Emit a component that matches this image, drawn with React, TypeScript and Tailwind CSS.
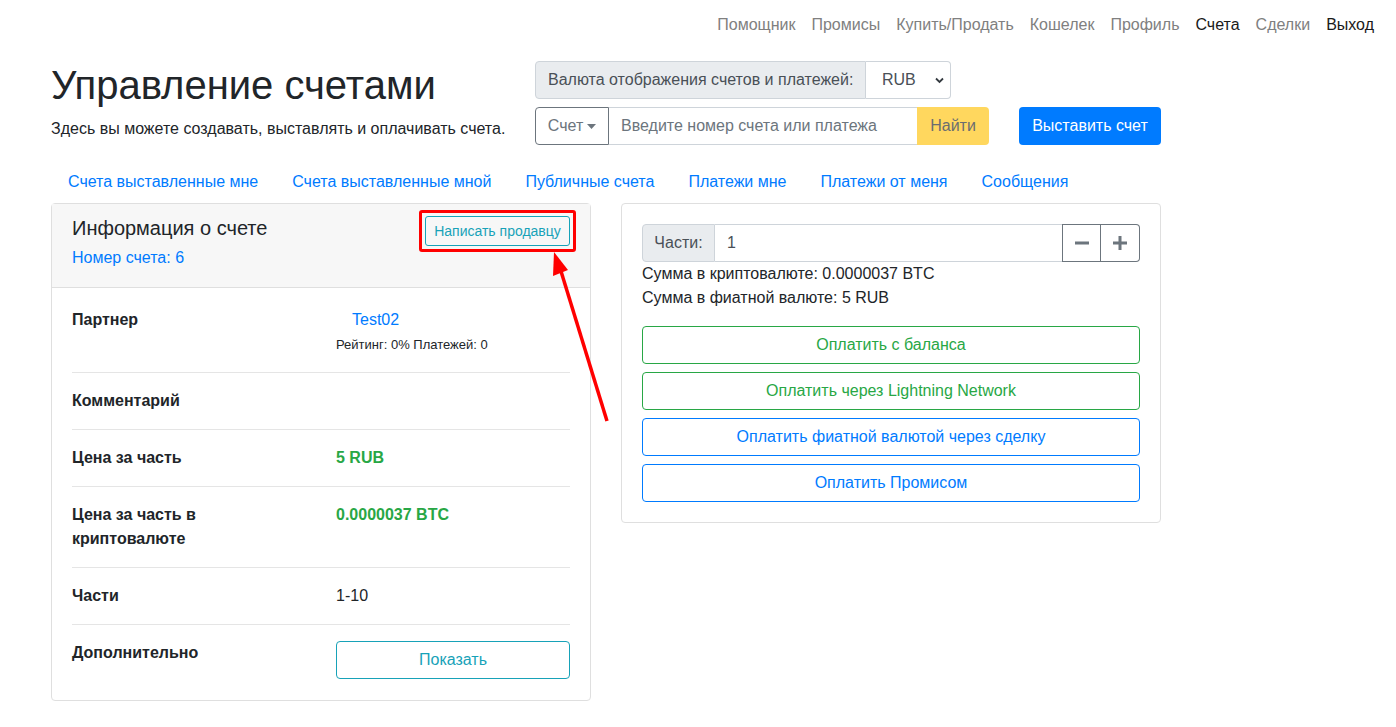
import React from 'react';

const font = { fontFamily: '"Liberation Sans", Arial, sans-serif' };

const topLinks = [
  { label: 'Помощник', active: false },
  { label: 'Промисы', active: false },
  { label: 'Купить/Продать', active: false },
  { label: 'Кошелек', active: false },
  { label: 'Профиль', active: false },
  { label: 'Счета', active: true },
  { label: 'Сделки', active: false },
  { label: 'Выход', active: true },
];

const tabs = [
  'Счета выставленные мне',
  'Счета выставленные мной',
  'Публичные счета',
  'Платежи мне',
  'Платежи от меня',
  'Сообщения',
];

const Row = ({ label, children, first }: { label: React.ReactNode; children?: React.ReactNode; first?: boolean }) => (
  <div className={`grid grid-cols-[264px_1fr] ${first ? 'pt-[20px] pb-[17px]' : 'border-t border-[#e5e5e5] py-4'}`}>
    <div className="font-bold leading-6 text-[#212529]">{label}</div>
    <div>{children}</div>
  </div>
);

const App = () => {
  return (
    <div className="relative min-h-[727px] bg-white text-[16px] text-[#212529]" style={font}>
      {/* top navbar */}
      <nav className="flex h-12 items-center justify-end pt-[2px] pr-[14px]">
        {topLinks.map((l) => (
          <a key={l.label} className={`px-2 leading-6 ${l.active ? 'text-[#1a1a1a]' : 'text-[#808080]'}`}>
            {l.label}
          </a>
        ))}
      </nav>

      <div className="mx-[36px] w-[1140px] px-[15px]">
        {/* header */}
        <div className="mt-[13px] flex">
          <div className="w-[484px] shrink-0">
            <h1 className="text-[40px] leading-[48px] font-normal">Управление счетами</h1>
            <p className="mt-2 leading-6">Здесь вы можете создавать, выставлять и оплачивать счета.</p>
          </div>
          <div className="flex flex-col gap-2">
            <div className="flex h-[38px] w-[416px]">
              <div className="flex w-[331px] shrink-0 items-center whitespace-nowrap rounded-l-[4px] border border-[#ced4da] bg-[#e9ecef] px-3 text-[#495057]">
                Валюта отображения счетов и платежей:
              </div>
              <div className="relative flex flex-1 items-center rounded-r-[4px] border border-l-0 border-[#ced4da] pl-4 text-[#495057]">
                RUB
                <svg className="absolute right-[6px] top-[15px]" width="9" height="7" viewBox="0 0 9 7">
                  <path d="M1 1.5 L4.5 5 L8 1.5" fill="none" stroke="#343a40" strokeWidth="1.8" />
                </svg>
              </div>
            </div>
            <div className="flex h-[38px] items-stretch">
              <div className="flex w-[74px] items-center justify-center gap-1 rounded-l-[4px] border border-[#6c757d] text-[#6c757d]">
                Счет
                <svg width="9" height="5" viewBox="0 0 9 5">
                  <path d="M0 0 L9 0 L4.5 5 Z" fill="#6c757d" />
                </svg>
              </div>
              <div className="flex w-[308px] items-center border-y border-[#ced4da] px-3 text-[#6c757d]">
                Введите номер счета или платежа
              </div>
              <div className="flex w-[72px] items-center justify-center rounded-r-[4px] bg-[#ffd75e] text-[#6b6d70]">
                Найти
              </div>
              <div className="ml-[30px] flex w-[142px] items-center justify-center rounded-[4px] bg-[#007bff] text-white">
                Выставить счет
              </div>
            </div>
          </div>
        </div>

        {/* tabs */}
        <div className="mt-[17px] flex">
          {tabs.map((t) => (
            <a key={t} className="whitespace-nowrap px-[17px] py-2 leading-6 text-[#007bff]">
              {t}
            </a>
          ))}
        </div>

        <div className="mt-[1px] flex items-start gap-[30px]">
          {/* left card */}
          <div className="w-[540px] rounded-[4px] border border-[#dfdfdf]">
            <div className="flex h-[84px] justify-between border-b border-[#dfdfdf] bg-[#f7f7f7] px-5 pt-3">
              <div>
                <div className="text-[20px] leading-6">Информация о счете</div>
                <div className="mt-[6px] leading-6 text-[#007bff]">Номер счета: 6</div>
              </div>
              <div className="relative h-[30px]">
                <div className="flex h-[30px] w-[145px] items-center justify-center rounded-[3px] border border-[#17a2b8] text-[14px] text-[#17a2b8]">
                  Написать продавцу
                </div>
                <span className="absolute -inset-[6px] rounded-[3px] border-[3px] border-[#ff0000]" />
              </div>
            </div>
            <div className="px-5 pb-[21px]">
              <Row label="Партнер" first>
                <div className="pl-4 leading-6 text-[#007bff]">Test02</div>
                <div className="mt-[3px] text-[13px] leading-5">Рейтинг: 0% Платежей: 0</div>
              </Row>
              <Row label="Комментарий" />
              <Row label="Цена за часть">
                <div className="font-bold leading-6 text-[#28a745]">5 RUB</div>
              </Row>
              <Row label={<>Цена за часть в<br />криптовалюте</>}>
                <div className="font-bold leading-6 text-[#28a745]">0.0000037 BTC</div>
              </Row>
              <Row label="Части">
                <div className="leading-6">1-10</div>
              </Row>
              <div className="grid grid-cols-[264px_1fr] border-t border-[#e5e5e5] pt-4">
                <div className="font-bold leading-6">Дополнительно</div>
                <div className="flex h-[38px] items-center justify-center rounded-[4px] border border-[#17a2b8] text-[#17a2b8]">
                  Показать
                </div>
              </div>
            </div>
          </div>

          {/* right card */}
          <div className="w-[540px] rounded-[4px] border border-[#dfdfdf] p-5">
            <div className="flex h-[38px]">
              <div className="flex w-[73px] items-center justify-center rounded-l-[4px] border border-[#ced4da] bg-[#e9ecef] text-[#495057]">
                Части:
              </div>
              <div className="flex flex-1 items-center border-y border-[#ced4da] px-3 text-[#495057]">1</div>
              <div className="flex w-[39px] items-center justify-center border border-[#6c757d]">
                <svg width="14" height="14" viewBox="0 0 14 14">
                  <rect x="0" y="5.5" width="14" height="3" fill="#6c757d" />
                </svg>
              </div>
              <div className="flex w-[39px] items-center justify-center rounded-r-[4px] border border-l-0 border-[#6c757d]">
                <svg width="14" height="14" viewBox="0 0 14 14">
                  <rect x="0" y="5.5" width="14" height="3" fill="#6c757d" />
                  <rect x="5.5" y="0" width="3" height="14" fill="#6c757d" />
                </svg>
              </div>
            </div>
            <div className="leading-6">Сумма в криптовалюте: 0.0000037 BTC</div>
            <div className="leading-6">Сумма в фиатной валюте: 5 RUB</div>
            <div className="mt-4 flex flex-col gap-2">
              <div className="flex h-[38px] items-center justify-center rounded-[4px] border border-[#28a745] text-[#28a745]">Оплатить с баланса</div>
              <div className="flex h-[38px] items-center justify-center rounded-[4px] border border-[#28a745] text-[#28a745]">Оплатить через Lightning Network</div>
              <div className="flex h-[38px] items-center justify-center rounded-[4px] border border-[#007bff] text-[#007bff]">Оплатить фиатной валютой через сделку</div>
              <div className="flex h-[38px] items-center justify-center rounded-[4px] border border-[#007bff] text-[#007bff]">Оплатить Промисом</div>
            </div>
          </div>
        </div>
      </div>

      {/* annotation arrow */}
      <svg className="pointer-events-none absolute left-0 top-0" width="1396" height="727">
        <line x1="607" y1="421" x2="560" y2="268" stroke="#ff0000" strokeWidth="3.5" />
        <polygon points="554,252 553,276 568,270" fill="#ff0000" />
      </svg>
    </div>
  );
};

export default App;
